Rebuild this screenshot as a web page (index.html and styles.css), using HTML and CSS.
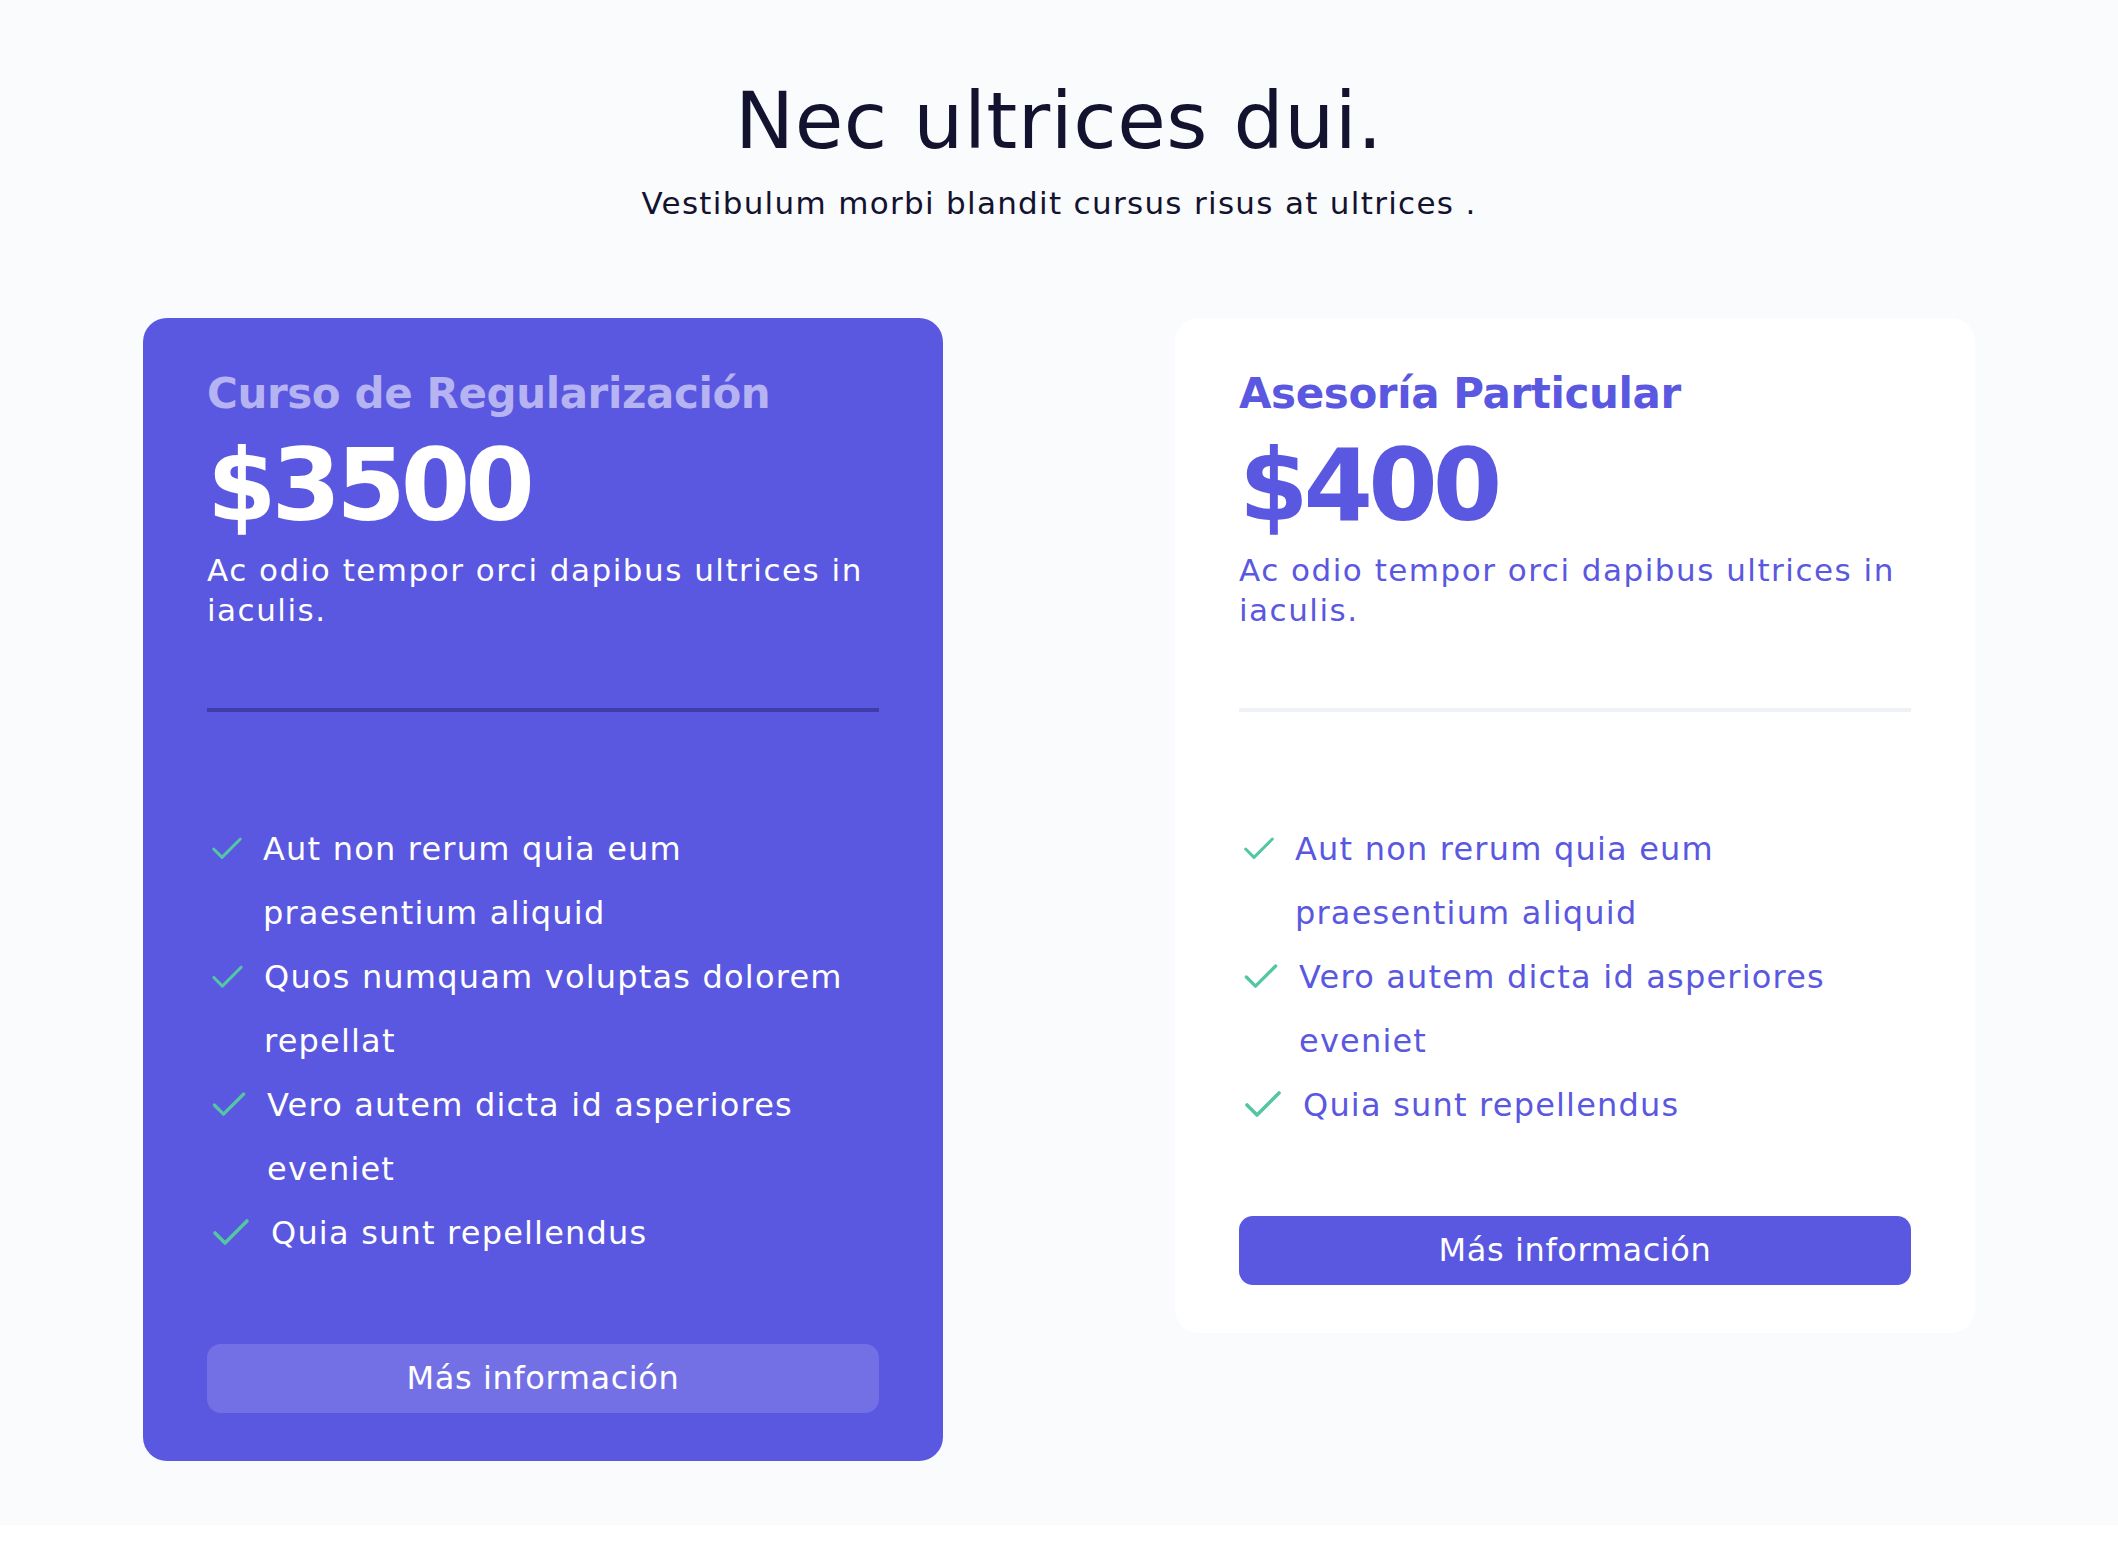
FILE: index.html
```html
<!DOCTYPE html>
<html lang="es">
<head>
<meta charset="utf-8">
<title>Nec ultrices dui.</title>
<link rel="stylesheet" href="styles.css">
</head>
<body>
<section class="pricing">
  <header class="pricing-header">
    <h1 class="pricing-title">Nec ultrices dui.</h1>
    <p class="pricing-subtitle">Vestibulum morbi blandit cursus risus at ultrices .</p>
  </header>

  <div class="plans">
    <article class="plan plan--featured">
      <h2 class="plan-name">Curso de Regularización</h2>
      <p class="plan-price">$3500</p>
      <p class="plan-desc">Ac odio tempor orci dapibus ultrices in iaculis.</p>
      <hr class="plan-divider">
      <ul class="plan-features">
        <li class="feature">
          <span class="feature-icon"><svg width="40" height="40" viewBox="0 0 24 24"><polyline points="20 6 9 17 4 12"/></svg></span>
          <span class="feature-text">Aut non rerum quia eum praesentium aliquid</span>
        </li>
        <li class="feature">
          <span class="feature-icon"><svg width="41" height="41" viewBox="0 0 24 24"><polyline points="20 6 9 17 4 12"/></svg></span>
          <span class="feature-text">Quos numquam voluptas dolorem repellat</span>
        </li>
        <li class="feature">
          <span class="feature-icon"><svg width="44" height="44" viewBox="0 0 24 24"><polyline points="20 6 9 17 4 12"/></svg></span>
          <span class="feature-text">Vero autem dicta id asperiores eveniet</span>
        </li>
        <li class="feature">
          <span class="feature-icon"><svg width="48" height="48" viewBox="0 0 24 24"><polyline points="20 6 9 17 4 12"/></svg></span>
          <span class="feature-text">Quia sunt repellendus</span>
        </li>
      </ul>
      <a class="plan-button" href="#">Más información</a>
    </article>

    <article class="plan">
      <h2 class="plan-name">Asesoría Particular</h2>
      <p class="plan-price">$400</p>
      <p class="plan-desc">Ac odio tempor orci dapibus ultrices in iaculis.</p>
      <hr class="plan-divider">
      <ul class="plan-features">
        <li class="feature">
          <span class="feature-icon"><svg width="40" height="40" viewBox="0 0 24 24"><polyline points="20 6 9 17 4 12"/></svg></span>
          <span class="feature-text">Aut non rerum quia eum praesentium aliquid</span>
        </li>
        <li class="feature">
          <span class="feature-icon"><svg width="44" height="44" viewBox="0 0 24 24"><polyline points="20 6 9 17 4 12"/></svg></span>
          <span class="feature-text">Vero autem dicta id asperiores eveniet</span>
        </li>
        <li class="feature">
          <span class="feature-icon"><svg width="48" height="48" viewBox="0 0 24 24"><polyline points="20 6 9 17 4 12"/></svg></span>
          <span class="feature-text">Quia sunt repellendus</span>
        </li>
      </ul>
      <a class="plan-button" href="#">Más información</a>
    </article>
  </div>
</section>
</body>
</html>
```

FILE: styles.css
```css
* {
  box-sizing: border-box;
}

html,
body {
  margin: 0;
  padding: 0;
  background: #ffffff;
}

body {
  font-family: "DejaVu Sans", "Liberation Sans", sans-serif;
  color: #13122f;
}

.pricing {
  background: #fafbfd;
  padding: 73px 0 64px;
}

.pricing-header {
  text-align: center;
}

.pricing-title {
  margin: 0;
  font-size: 79px;
  line-height: 96px;
  font-weight: 400;
  letter-spacing: 0.5px;
  color: #13122f;
}

.pricing-subtitle {
  margin: 14px 0 0;
  font-size: 31px;
  line-height: 40px;
  letter-spacing: 1.3px;
  color: #13122f;
}

.plans {
  margin-top: 95px;
  display: grid;
  grid-template-columns: repeat(2, 800px);
  justify-content: center;
  column-gap: 232px;
  align-items: start;
}

.plan {
  background: #ffffff;
  border-radius: 24px;
  padding: 48px 64px;
  color: #5a57e0;
}

.plan--featured {
  background: #5a57e0;
  color: #ffffff;
}

.plan-name {
  margin: 0;
  font-size: 42px;
  line-height: 56px;
  font-weight: 700;
  letter-spacing: -0.4px;
  color: #5a57e0;
}

.plan--featured .plan-name {
  color: #b5b3f1;
}

.plan-price {
  margin: 0;
  font-size: 100px;
  line-height: 128px;
  font-weight: 700;
  letter-spacing: -5px;
}

.plan-desc {
  margin: 0;
  font-size: 31px;
  line-height: 40px;
  letter-spacing: 1.5px;
}

.plan-divider {
  margin: 78px 0 0;
  height: 4px;
  border: 0;
  background: #eef1f5;
}

.plan--featured .plan-divider {
  background: #403dab;
}

.plan-features {
  list-style: none;
  margin: 105px 0 79px;
  padding: 0;
}

.feature {
  display: flex;
  align-items: flex-start;
  gap: 16px;
  font-size: 32px;
  line-height: 64px;
  letter-spacing: 1.2px;
}

.feature-icon {
  flex: none;
  height: 64px;
  display: flex;
  align-items: center;
}

.feature-icon svg {
  display: block;
  fill: none;
  stroke: #55c6a4;
  stroke-width: 1.8;
  stroke-linecap: round;
  stroke-linejoin: round;
}

.plan-button {
  display: block;
  height: 69px;
  line-height: 69px;
  border-radius: 14px;
  background: #5a57e0;
  color: #ffffff;
  text-align: center;
  text-decoration: none;
  font-size: 32px;
  letter-spacing: 0.6px;
}

.plan--featured .plan-button {
  background: #7370e6;
}
```
